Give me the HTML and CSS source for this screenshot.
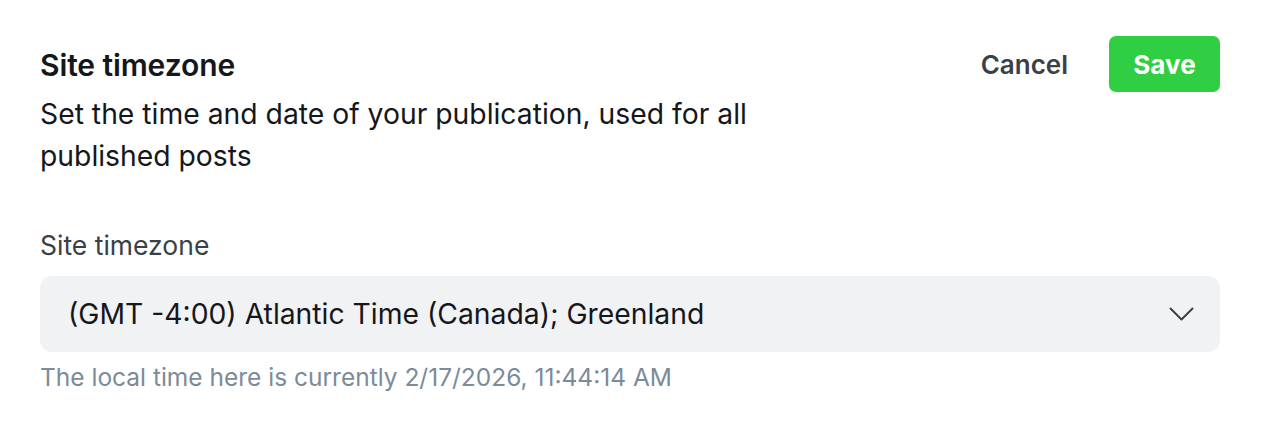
FILE: index.html
```html
<!DOCTYPE html>
<html>
<head>
<meta charset="utf-8">
<link rel="stylesheet" href="styles.css">
</head>
<body>
<div class="panel">
  <div class="header">
    <div class="intro">
      <h2 class="title">Site timezone</h2>
      <p class="desc">Set the time and date of your publication, used for all published posts</p>
    </div>
    <div class="actions">
      <button class="btn-cancel">Cancel</button>
      <button class="btn-save">Save</button>
    </div>
  </div>
  <div class="field">
    <label class="label">Site timezone</label>
    <div class="select">
      <span class="select-value">(GMT -4:00) Atlantic Time (Canada); Greenland</span>
      <svg class="chevron" width="25" height="15" viewBox="0 0 25 15" fill="none"><path d="M1.5 1.5 L12.5 12.5 L23.5 1.5" stroke="#394047" stroke-width="2" stroke-linecap="round" stroke-linejoin="round"/></svg>
    </div>
    <p class="hint">The local time here is currently 2/17/2026, 11:44:14 AM</p>
  </div>
</div>
</body>
</html>
```
FILE: styles.css
```css
* { box-sizing: border-box; }
html, body { margin: 0; padding: 0; background: #fff; }
body { font-family: Inter, "Noto Sans", sans-serif; color: #15171a; }
.panel { padding: 36px 42px 0 40px; }
.header { display: flex; justify-content: space-between; align-items: flex-start; }
.intro { width: 740px; }
.title { margin: 11px 0 0; font-size: 30px; font-weight: 600; line-height: 36px; letter-spacing: -0.1px; }
.desc { margin: 10px 0 0; font-size: 28.3px; line-height: 42px; color: #15171a; }
.actions { display: flex; align-items: center; gap: 41px; }
button { font-family: inherit; border: 0; cursor: pointer; }
.btn-cancel { background: none; padding: 0; font-size: 26px; font-weight: 600; color: #394047; }
.btn-save { background: #30cf43; color: #fff; font-size: 26px; font-weight: 700; width: 111px; height: 56px; border-radius: 7px; padding: 0; }
.field { margin-top: 52px; }
.label { display: block; font-size: 26.5px; line-height: 32px; color: #394047; }
.select { margin-top: 15px; height: 76px; background: #f1f2f4; border-radius: 12px; display: flex; align-items: center; justify-content: space-between; padding: 0 26px 0 28px; }
.select-value { font-size: 28.3px; color: #15171a; }
.chevron { display: block; }
.hint { margin: 9px 0 0; font-size: 24.5px; line-height: 32px; color: #7c8b9a; }
```
